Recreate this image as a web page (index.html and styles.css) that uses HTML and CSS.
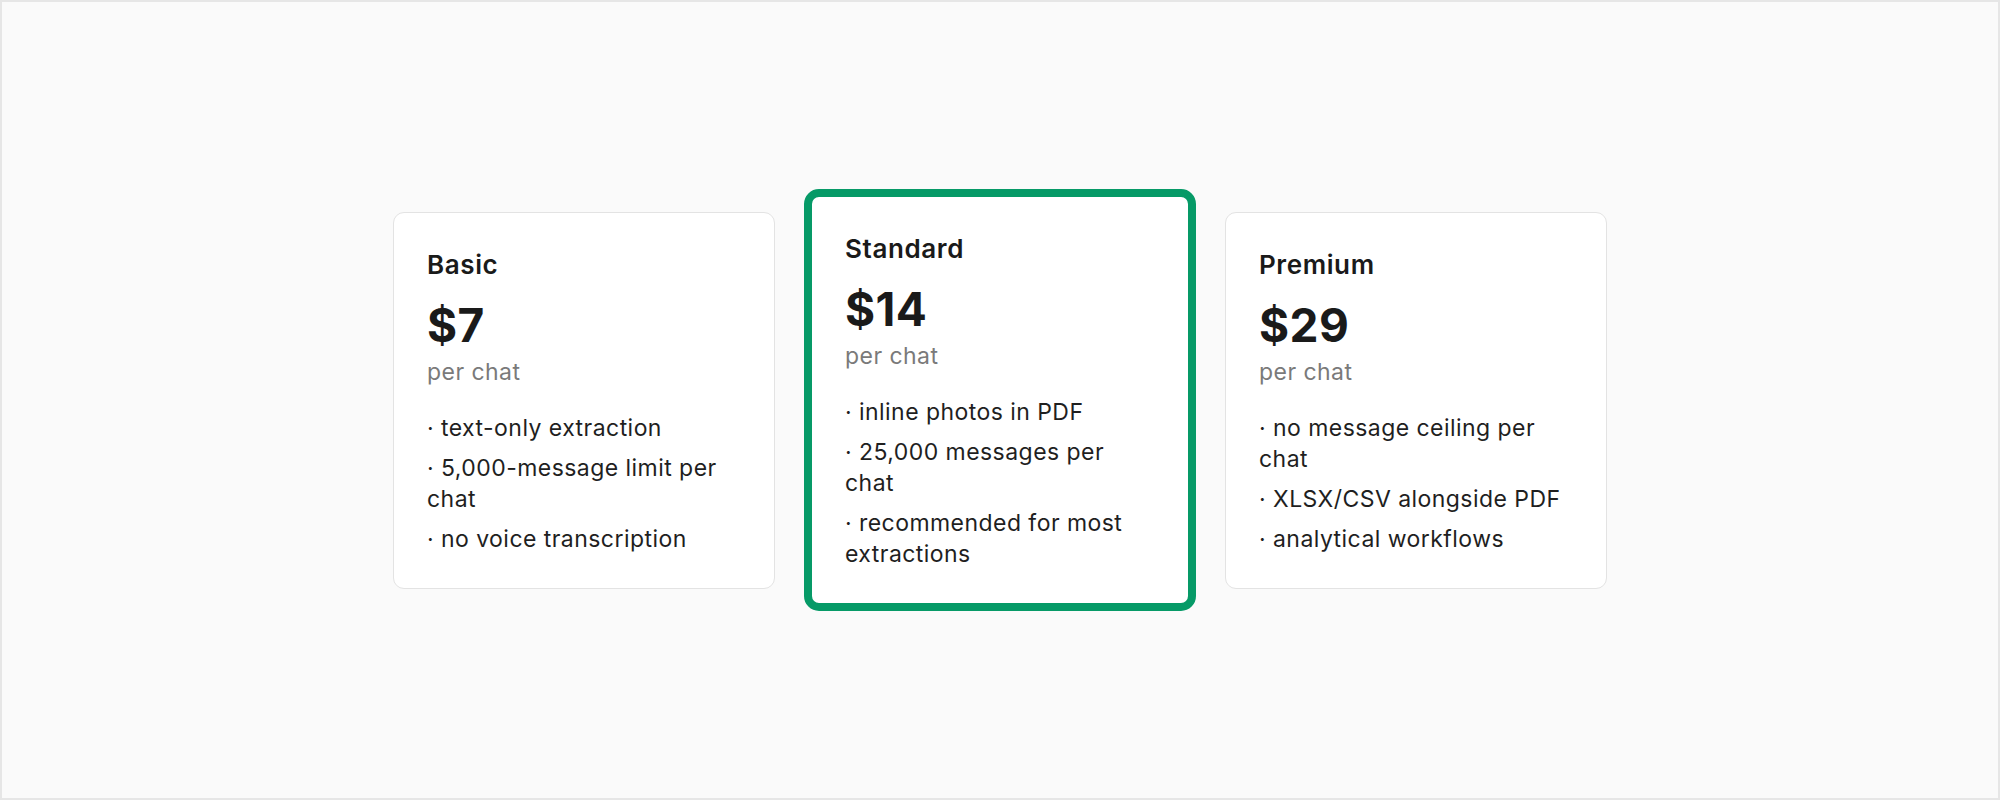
FILE: index.html
```html
<!DOCTYPE html>
<html lang="en">
<head>
<meta charset="utf-8">
<title>Plans</title>
<link rel="stylesheet" href="styles.css">
</head>
<body>
<div class="frame">
  <div class="plans">
    <div class="card">
      <div class="name">Basic</div>
      <div class="price">$7</div>
      <div class="unit">per chat</div>
      <ul class="features">
        <li>· text-only extraction</li>
        <li>· 5,000-message limit per chat</li>
        <li>· no voice transcription</li>
      </ul>
    </div>
    <div class="card featured">
      <div class="name">Standard</div>
      <div class="price">$14</div>
      <div class="unit">per chat</div>
      <ul class="features">
        <li>· inline photos in PDF</li>
        <li>· 25,000 messages per chat</li>
        <li>· recommended for most extractions</li>
      </ul>
    </div>
    <div class="card">
      <div class="name">Premium</div>
      <div class="price">$29</div>
      <div class="unit">per chat</div>
      <ul class="features">
        <li>· no message ceiling per chat</li>
        <li>· XLSX/CSV alongside PDF</li>
        <li>· analytical workflows</li>
      </ul>
    </div>
  </div>
</div>
</body>
</html>
```

FILE: styles.css
```css
html, body {
  margin: 0;
  padding: 0;
}
body {
  font-family: Inter, "Liberation Sans", sans-serif;
  color: #1a1a1a;
}
.frame {
  box-sizing: border-box;
  width: 2000px;
  height: 800px;
  border: 2px solid #e6e6e6;
  background: #fafafa;
  display: flex;
  align-items: center;
  justify-content: center;
}
.plans {
  display: flex;
  align-items: center;
  gap: 29px;
}
.card {
  box-sizing: border-box;
  width: 382px;
  background: #ffffff;
  border: 1px solid #e3e3e3;
  border-radius: 11px;
  padding: 34px 33px 33px 33px;
}
.card.featured {
  width: 392px;
  border: 8px solid #069a67;
  border-radius: 15px;
}
.name {
  font-size: 26px;
  line-height: 36px;
  font-weight: 600;
  letter-spacing: 0.6px;
  color: #1a1a1a;
}
.price {
  margin-top: 15px;
  font-size: 46px;
  line-height: 54px;
  font-weight: 700;
  letter-spacing: 0.4px;
  color: #1a1a1a;
}
.unit {
  margin-top: 5px;
  font-size: 23px;
  line-height: 30px;
  letter-spacing: 0.45px;
  color: #7a7a7a;
}
.features {
  list-style: none;
  margin: 26px 0 0 0;
  padding: 0;
  display: flex;
  flex-direction: column;
  gap: 9px;
}
.features li {
  font-size: 23px;
  line-height: 31px;
  letter-spacing: 0.45px;
  color: #1f1f1f;
}
```
